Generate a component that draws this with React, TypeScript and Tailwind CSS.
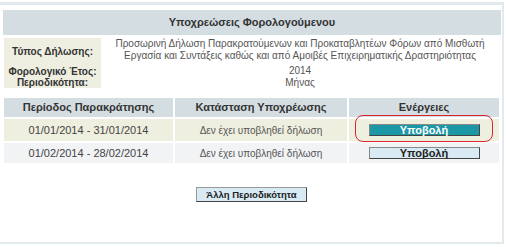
const font = "font-['Tahoma','Liberation_Sans',sans-serif]";

function ActionButton({ active }: { active?: boolean }) {
  return (
    <button
      type="button"
      className={`h-[12px] w-[111px] border border-t-[#888] border-l-[#888] border-b-[#444] border-r-[#444] text-[11px] font-bold leading-[10px] ${
        active ? "bg-[#1b97a6] text-white" : "bg-[#d8eaf3] text-[#222]"
      }`}
    >
      Υποβολή
    </button>
  );
}

const rows = [
  { period: "01/01/2014 - 31/01/2014", bg: "bg-[#efefdf]", h: "h-[22px]", active: true },
  { period: "01/02/2014 - 28/02/2014", bg: "bg-[#f2f3f5]", h: "h-[20px]", active: false },
];

export default function App() {
  return (
    <div className={`h-[247px] w-[506px] bg-white pt-[2px] ${font}`}>
      <div className="h-[242px] w-[504px] border-t-[3px] border-r-2 border-b-2 border-[#e3eaed] pl-[3px] pr-[1px] pt-[5px]">
        {/* Title */}
        <div className="flex h-[25px] items-center justify-center bg-[#d4dee2] text-[11px] font-bold text-[#333]">
          Υποχρεώσεις Φορολογούμενου
        </div>

        {/* Info */}
        <div className="ml-[1px] mt-[3px] grid grid-cols-[97px_1fr] whitespace-nowrap text-[10px]">
          <div className="flex h-[26px] items-center justify-center bg-[#eeefe0] font-bold text-[#333]">
            Τύπος Δήλωσης:
          </div>
          <div className="pr-[2px] text-center leading-[12px] text-[#555]">
            Προσωρινή Δήλωση Παρακρατούμενων και Προκαταβλητέων Φόρων από Μισθωτή
            <br />
            Εργασία και Συντάξεις καθώς και από Αμοιβές Επιχειρηματικής Δραστηριότητας
          </div>
          <div className="flex h-[13px] items-end justify-center bg-[#eeefe0] font-bold leading-[11px] text-[#333]">
            Φορολογικό Έτος:
          </div>
          <div className="flex h-[13px] items-center justify-center pr-[2px] leading-[11px] text-[#555]">2014</div>
          <div className="flex h-[11px] items-center justify-center bg-[#eeefe0] font-bold leading-[11px] text-[#333]">
            Περιοδικότητα:
          </div>
          <div className="flex h-[11px] items-center justify-center pr-[2px] leading-[11px] text-[#555]">Μήνας</div>
        </div>

        {/* Obligations table */}
        <div className="ml-[1px] mt-[10px] grid grid-cols-[169px_172px_150px] gap-x-[2px] gap-y-[2px] text-[11px]">
          <div className="flex h-[19px] items-center justify-center bg-[#d4dee2] font-bold text-[#333]">
            Περίοδος Παρακράτησης
          </div>
          <div className="flex h-[19px] items-center justify-center bg-[#d4dee2] font-bold text-[#333]">
            Κατάσταση Υποχρέωσης
          </div>
          <div className="flex h-[19px] items-center justify-center bg-[#d4dee2] font-bold text-[#333]">
            Ενέργειες
          </div>
          {rows.map((r) => (
            <div key={r.period} className="contents">
              <div className={`flex ${r.h} items-center justify-center ${r.bg} text-[#444]`}>{r.period}</div>
              <div className={`flex ${r.h} items-center justify-center ${r.bg} text-[10px] text-[#555]`}>
                Δεν έχει υποβληθεί δήλωση
              </div>
              <div className={`relative flex ${r.h} items-center justify-center ${r.bg}`}>
                <ActionButton active={r.active} />
                {r.active && (
                  <span className="pointer-events-none absolute left-[6px] top-[-4px] z-10 h-[27px] w-[138px] rounded-[8px] border-[1.5px] border-[#d8262c]" />
                )}
              </div>
            </div>
          ))}
        </div>

        {/* Other periodicity */}
        <div className="mt-[24px] flex justify-center pr-[1px]">
          <button
            type="button"
            className="h-[15px] w-[111px] border border-t-[#999] border-l-[#999] border-b-[#444] border-r-[#444] bg-[#d8eaf3] text-[9.5px] font-bold leading-[11px] text-[#222]"
          >
            Άλλη Περιοδικότητα
          </button>
        </div>
      </div>
    </div>
  );
}
